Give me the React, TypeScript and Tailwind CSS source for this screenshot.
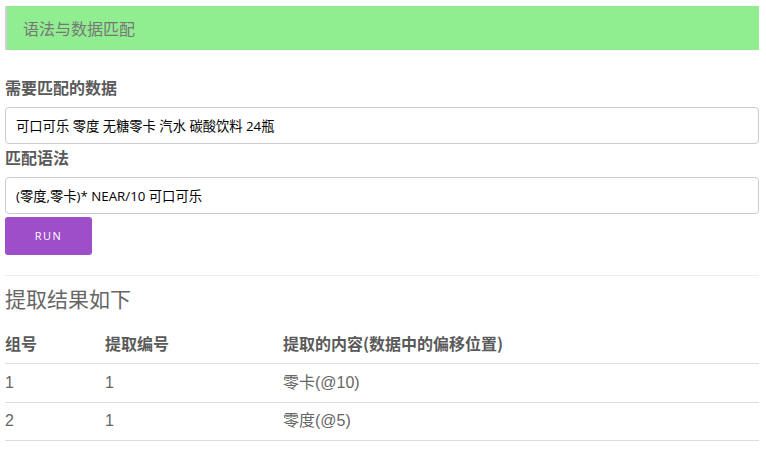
import React, { useState } from "react";

const cjk = "font-['Noto_Sans_CJK_SC','Noto_Sans',sans-serif]";

const rows = [
  { group: "1", id: "1", content: "零卡(@10)" },
  { group: "2", id: "1", content: "零度(@5)" },
];

const App = () => {
  const [data, setData] = useState("可口可乐 零度 无糖零卡 汽水 碳酸饮料 24瓶");
  const [syntax, setSyntax] = useState("(零度,零卡)* NEAR/10 可口可乐");

  return (
    <div className={`min-h-[450px] bg-white pl-[5px] pr-[7px] pt-[6px] ${cjk}`}>
      {/* title bar */}
      <div className="flex h-[44px] items-center border-l-[2px] border-[#d0d0d0] bg-[#90ee90] pl-[16px] text-[16px] text-[#777]">
        语法与数据匹配
      </div>

      <div className="mt-[26px] text-[16px] font-bold leading-[22px] text-[#5a5a5a]">需要匹配的数据</div>
      <input
        value={data}
        onChange={(e) => setData(e.target.value)}
        className="mt-[9px] block h-[37px] w-full rounded-[4px] border border-[#cccccc] px-[10px] text-[13.3px] text-black outline-none font-['Open_Sans','Noto_Sans_CJK_SC',sans-serif]"
      />

      <div className="mt-[2px] text-[16px] font-bold leading-[22px] text-[#5a5a5a]">匹配语法</div>
      <input
        value={syntax}
        onChange={(e) => setSyntax(e.target.value)}
        className="mt-[9px] block h-[37px] w-full rounded-[4px] border border-[#cccccc] px-[10px] text-[13.3px] text-black outline-none font-['Open_Sans','Noto_Sans_CJK_SC',sans-serif]"
      />

      <button className="mt-[3px] flex h-[38px] w-[87px] items-center justify-center rounded-[3px] bg-[#9e4ec8] text-[11px] tracking-[1.5px] text-white font-['Open_Sans',sans-serif]">
        RUN
      </button>

      <hr className="mt-[20px] border-t border-[#eeeeee]" />

      <div className="mt-[8px] text-[21px] leading-[28px] text-[#666]">提取结果如下</div>

      <table className="mt-[11px] w-full border-collapse text-left text-[16px] text-[#5a5a5a]">
        <thead>
          <tr className="h-[40px] border-b border-[#dddddd]">
            <th className="w-[100px] p-0 font-bold">组号</th>
            <th className="w-[178px] p-0 font-bold">提取编号</th>
            <th className="p-0 font-bold">提取的内容(数据中的偏移位置)</th>
          </tr>
        </thead>
        <tbody className="font-['Liberation_Sans','Noto_Sans_CJK_SC',sans-serif] text-[#666]">
          {rows.map((r, i) => (
            <tr key={i} className={`border-b border-[#dddddd] ${i === 0 ? "h-[39px]" : "h-[38px]"}`}>
              <td className="p-0">{r.group}</td>
              <td className="p-0">{r.id}</td>
              <td className="p-0">{r.content}</td>
            </tr>
          ))}
        </tbody>
      </table>
    </div>
  );
};

export default App;
